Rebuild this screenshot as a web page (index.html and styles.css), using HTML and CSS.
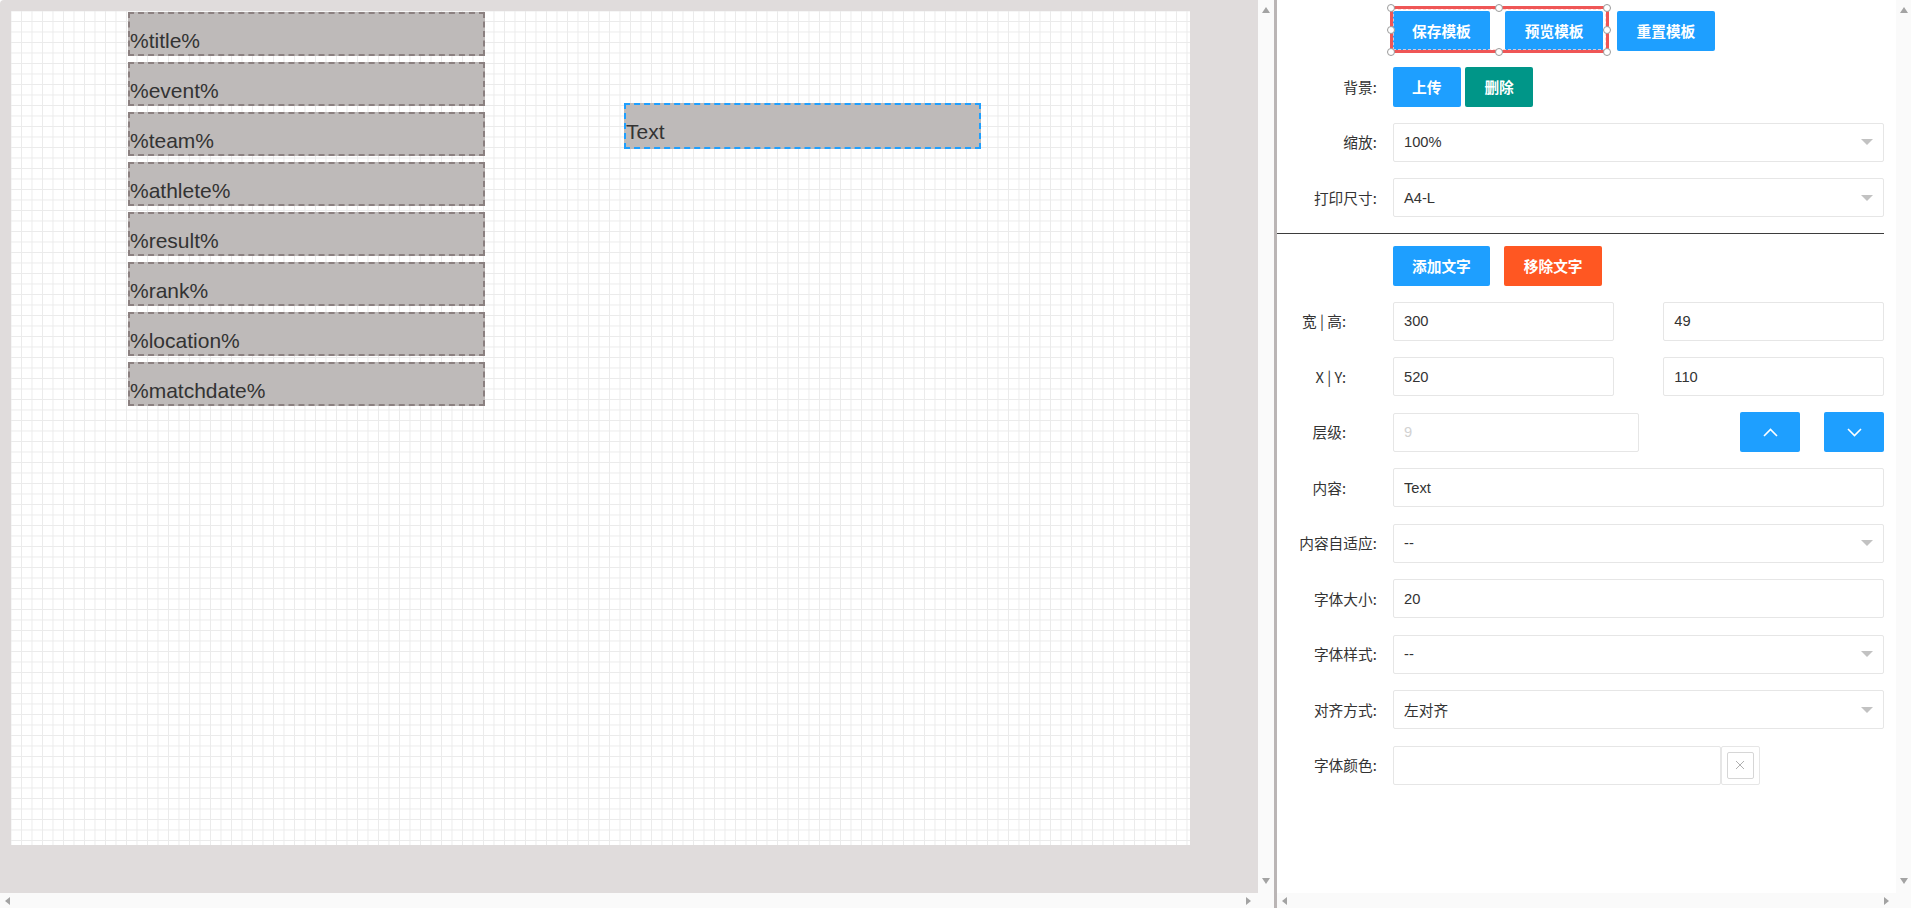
FILE: index.html
```html
<!DOCTYPE html>
<html lang="zh-CN">
<head>
    <meta charset="UTF-8">
    <meta name="viewport" content="width=device-width, initial-scale=1.0">
    <title>打印模板设计</title>
    <link rel="stylesheet" href="styles.css">
</head>
<body>
<div class="app">

    <!-- 画布区 -->
    <div class="stage">
        <div class="stage-main">
            <div class="stage-view">
                <div class="paper">
                    <div class="field" style="left:117px;top:1px">%title%</div>
                    <div class="field" style="left:117px;top:51px">%event%</div>
                    <div class="field" style="left:117px;top:101px">%team%</div>
                    <div class="field" style="left:117px;top:151px">%athlete%</div>
                    <div class="field" style="left:117px;top:201px">%result%</div>
                    <div class="field" style="left:117px;top:251px">%rank%</div>
                    <div class="field" style="left:117px;top:301px">%location%</div>
                    <div class="field" style="left:117px;top:351px">%matchdate%</div>
                    <div class="field active" style="left:613px;top:92px">Text</div>
                </div>
            </div>
            <div class="vbar"><i class="arr up"></i><i class="arr down"></i></div>
        </div>
        <div class="hbar">
            <div class="hbar-track"><i class="arr left"></i><i class="arr right"></i></div>
            <div class="corner"></div>
        </div>
    </div>

    <div class="splitter"></div>

    <!-- 属性面板 -->
    <div class="panel">
        <div class="panel-main">
            <form class="form">
                <div class="row">
                    <div class="label"></div>
                    <div class="block">
                        <div class="btn-pair">
                            <button type="button" class="btn">保存模板</button>
                            <button type="button" class="btn">预览模板</button>
                            <div class="sel">
                                <i class="handle tl"></i><i class="handle tc"></i><i class="handle tr"></i>
                                <i class="handle ml"></i><i class="handle mr"></i>
                                <i class="handle bl"></i><i class="handle bc"></i><i class="handle br"></i>
                            </div>
                        </div>
                        <button type="button" class="btn">重置模板</button>
                    </div>
                </div>

                <div class="row">
                    <div class="label">背景:</div>
                    <div class="block tight">
                        <button type="button" class="btn">上传</button>
                        <button type="button" class="btn btn-teal">删除</button>
                    </div>
                </div>

                <div class="row">
                    <div class="label">缩放:</div>
                    <div class="block">
                        <div class="select"><span>100%</span><i class="edge"></i></div>
                    </div>
                </div>

                <div class="row">
                    <div class="label">打印尺寸:</div>
                    <div class="block">
                        <div class="select"><span>A4-L</span><i class="edge"></i></div>
                    </div>
                </div>

                <hr class="divider">

                <div class="row">
                    <div class="label"></div>
                    <div class="block">
                        <button type="button" class="btn">添加文字</button>
                        <button type="button" class="btn btn-orange">移除文字</button>
                    </div>
                </div>

                <div class="row">
                    <div class="label inset">宽 | 高:</div>
                    <div class="block split">
                        <input class="input half" value="300">
                        <input class="input half" value="49">
                    </div>
                </div>

                <div class="row">
                    <div class="label inset">X | Y:</div>
                    <div class="block split">
                        <input class="input half" value="520">
                        <input class="input half" value="110">
                    </div>
                </div>

                <div class="row">
                    <div class="label inset">层级:</div>
                    <div class="block">
                        <input class="input level" value="9" disabled>
                        <div class="order">
                            <button type="button" class="btn btn-icon">
                                <svg width="15" height="9" viewBox="0 0 15 9"><polyline points="1,8 7.5,1.5 14,8" fill="none" stroke="#fff" stroke-width="1.6"/></svg>
                            </button>
                            <button type="button" class="btn btn-icon">
                                <svg width="15" height="9" viewBox="0 0 15 9"><polyline points="1,1 7.5,7.5 14,1" fill="none" stroke="#fff" stroke-width="1.6"/></svg>
                            </button>
                        </div>
                    </div>
                </div>

                <div class="row">
                    <div class="label inset">内容:</div>
                    <div class="block">
                        <input class="input" value="Text">
                    </div>
                </div>

                <div class="row">
                    <div class="label">内容自适应:</div>
                    <div class="block">
                        <div class="select"><span>--</span><i class="edge"></i></div>
                    </div>
                </div>

                <div class="row">
                    <div class="label">字体大小:</div>
                    <div class="block">
                        <input class="input" value="20">
                    </div>
                </div>

                <div class="row">
                    <div class="label">字体样式:</div>
                    <div class="block">
                        <div class="select"><span>--</span><i class="edge"></i></div>
                    </div>
                </div>

                <div class="row">
                    <div class="label">对齐方式:</div>
                    <div class="block">
                        <div class="select"><span>左对齐</span><i class="edge"></i></div>
                    </div>
                </div>

                <div class="row">
                    <div class="label">字体颜色:</div>
                    <div class="block">
                        <input class="input color-value" value="">
                        <div class="picker">
                            <div class="picker-trigger">
                                <svg width="10" height="10" viewBox="0 0 10 10"><path d="M1 1L9 9M9 1L1 9" stroke="#b0b0b0" stroke-width="1"/></svg>
                            </div>
                        </div>
                    </div>
                </div>
            </form>
            <div class="vbar narrow"><i class="arr up"></i><i class="arr down"></i></div>
        </div>
        <div class="hbar">
            <div class="hbar-track"><i class="arr left"></i><i class="arr right"></i></div>
            <div class="corner narrow"></div>
        </div>
    </div>

</div>
</body>
</html>
```

FILE: styles.css
```css
* {
    box-sizing: border-box;
}
html, body {
    margin: 0;
    height: 100%;
}
body {
    font-family: "Liberation Sans", "Noto Sans CJK SC", sans-serif;
    font-size: 14.7px;
    color: #333;
    background: #fff;
    overflow: hidden;
}
.app {
    display: flex;
    height: 100vh;
}

/* 画布区 */
.stage {
    width: 1274px;
    flex: none;
    display: flex;
    flex-direction: column;
}
.stage-main {
    flex: 1;
    display: flex;
    min-height: 0;
}
.stage-view {
    flex: 1;
    padding: 11px;
    background: #e0dcdc;
    border-top-left-radius: 4px;
}
.paper {
    position: relative;
    width: 1179px;
    height: 834px;
    background-color: #fff;
    background-image:
        linear-gradient(90deg, #ebebeb 1px, transparent 1px),
        linear-gradient(#ebebeb 1px, transparent 1px);
    background-size: 10.5px 10.5px;
    background-position: 10px 10px;
}
.field {
    position: absolute;
    width: 357px;
    height: 44px;
    display: flex;
    align-items: flex-end;
    padding: 0 0 1px 0;
    background: #bebab9;
    border: 2px dashed #8b8080;
    font-family: "Liberation Sans", sans-serif;
    font-size: 21px;
    line-height: 24px;
    color: #333;
    white-space: nowrap;
}
.field.active {
    height: 46px;
    padding-bottom: 3px;
    border-color: #1e9fff;
}

/* 滚动条 */
.vbar {
    width: 16px;
    flex: none;
    display: flex;
    flex-direction: column;
    justify-content: space-between;
    align-items: center;
    padding: 7px 0 9px;
    background: #fafafa;
}
.vbar.narrow {
    width: 15px;
}
.hbar {
    height: 15px;
    flex: none;
    display: flex;
    background: #fafafa;
}
.hbar-track {
    flex: 1;
    display: flex;
    justify-content: space-between;
    align-items: center;
    padding: 0 7px 0 5px;
}
.corner {
    width: 16px;
}
.corner.narrow {
    width: 15px;
}
.arr {
    display: block;
    width: 0;
    height: 0;
    border: 4px solid transparent;
}
.arr.up {
    border-top-width: 0;
    border-bottom: 6px solid #a3a3a3;
}
.arr.down {
    border-bottom-width: 0;
    border-top: 6px solid #a3a3a3;
}
.arr.left {
    border-left-width: 0;
    border-right: 5px solid #a3a3a3;
}
.arr.right {
    border-right-width: 0;
    border-left: 5px solid #a3a3a3;
}

.splitter {
    width: 3px;
    flex: none;
    background: #bab5b5;
}

/* 属性面板 */
.panel {
    flex: 1;
    min-width: 0;
    display: flex;
    flex-direction: column;
}
.panel-main {
    flex: 1;
    display: flex;
    min-height: 0;
}
.form {
    flex: 1;
    margin: 0;
    padding: 11px 12px 0 0;
}
.row {
    display: flex;
    align-items: center;
    height: 40px;
    margin-bottom: 15.5px;
}
.label {
    width: 115.5px;
    flex: none;
    padding-right: 15.75px;
    text-align: right;
    font-family: "Noto Sans CJK SC", sans-serif;
    line-height: 20px;
    color: #333;
    white-space: nowrap;
}
.label.inset {
    padding-right: 46.5px;
}
.block {
    flex: 1;
    height: 40px;
    display: flex;
    align-items: center;
    gap: 14px;
}
.block.tight {
    gap: 4px;
}
.block.split {
    justify-content: space-between;
}
.divider {
    height: 1px;
    margin: 0 0 11.5px;
    border: 0;
    background: #3d3d3d;
}

.btn {
    height: 40px;
    padding: 0 19.5px;
    border: 0;
    border-radius: 2px;
    background: #1e9fff;
    color: #fff;
    font-family: "Noto Sans CJK SC", sans-serif;
    font-size: 14.7px;
    font-weight: bold;
    line-height: 40px;
    white-space: nowrap;
}
.btn-teal {
    background: #009688;
}
.btn-orange {
    background: #ff5722;
}
.btn-icon {
    width: 60px;
    padding: 0;
    display: flex;
    align-items: center;
    justify-content: center;
}

/* 选中框 */
.btn-pair {
    position: relative;
    display: flex;
    gap: 15px;
}
.sel {
    position: absolute;
    left: -3px;
    top: -5px;
    width: 219px;
    height: 47px;
    border: 3px solid #ef5656;
}
.sel::after {
    content: "";
    position: absolute;
    inset: 0;
    border: 1px dashed rgba(255, 210, 210, 0.8);
}
.handle {
    position: absolute;
    z-index: 1;
    width: 8px;
    height: 8px;
    border: 1.5px solid #9a9a9a;
    border-radius: 50%;
    background: #fff;
    transform: translate(-50%, -50%);
}
.handle.tl { left: -1.5px; top: -1.5px; }
.handle.tc { left: 50%; top: -1.5px; }
.handle.tr { left: calc(100% + 1.5px); top: -1.5px; }
.handle.ml { left: -1.5px; top: 50%; }
.handle.mr { left: calc(100% + 1.5px); top: 50%; }
.handle.bl { left: -1.5px; top: calc(100% + 1.5px); }
.handle.bc { left: 50%; top: calc(100% + 1.5px); }
.handle.br { left: calc(100% + 1.5px); top: calc(100% + 1.5px); }

.input,
.select {
    width: 100%;
    height: 39px;
    border: 1px solid #e6e6e6;
    border-radius: 2px;
    background: #fff;
    color: #333;
    font-family: "Liberation Sans", "Noto Sans CJK SC", sans-serif;
    font-size: 14.7px;
}
.input {
    padding: 0 10.5px;
    outline: none;
}
.input:disabled {
    color: #d2d2d2;
}
.input.half {
    width: 45%;
}
.input.level {
    width: 246px;
}
.order {
    margin-left: auto;
    display: flex;
    gap: 24px;
}
.select {
    display: flex;
    align-items: center;
    padding: 0 10px 0 10.5px;
}
.select span {
    flex: 1;
}
.edge {
    width: 0;
    height: 0;
    border: 6px solid transparent;
    border-bottom-width: 0;
    border-top: 6px solid #c2c2c2;
}

.color-value {
    width: 328px;
}
.block .color-value + .picker {
    margin-left: -14px;
}
.picker {
    width: 39px;
    height: 39px;
    flex: none;
    display: flex;
    align-items: center;
    justify-content: center;
    border: 1px solid #e6e6e6;
    border-radius: 2px;
}
.picker-trigger {
    width: 27px;
    height: 27px;
    display: flex;
    align-items: center;
    justify-content: center;
    border: 1px solid #d6d6d6;
    border-radius: 2px;
}
```
